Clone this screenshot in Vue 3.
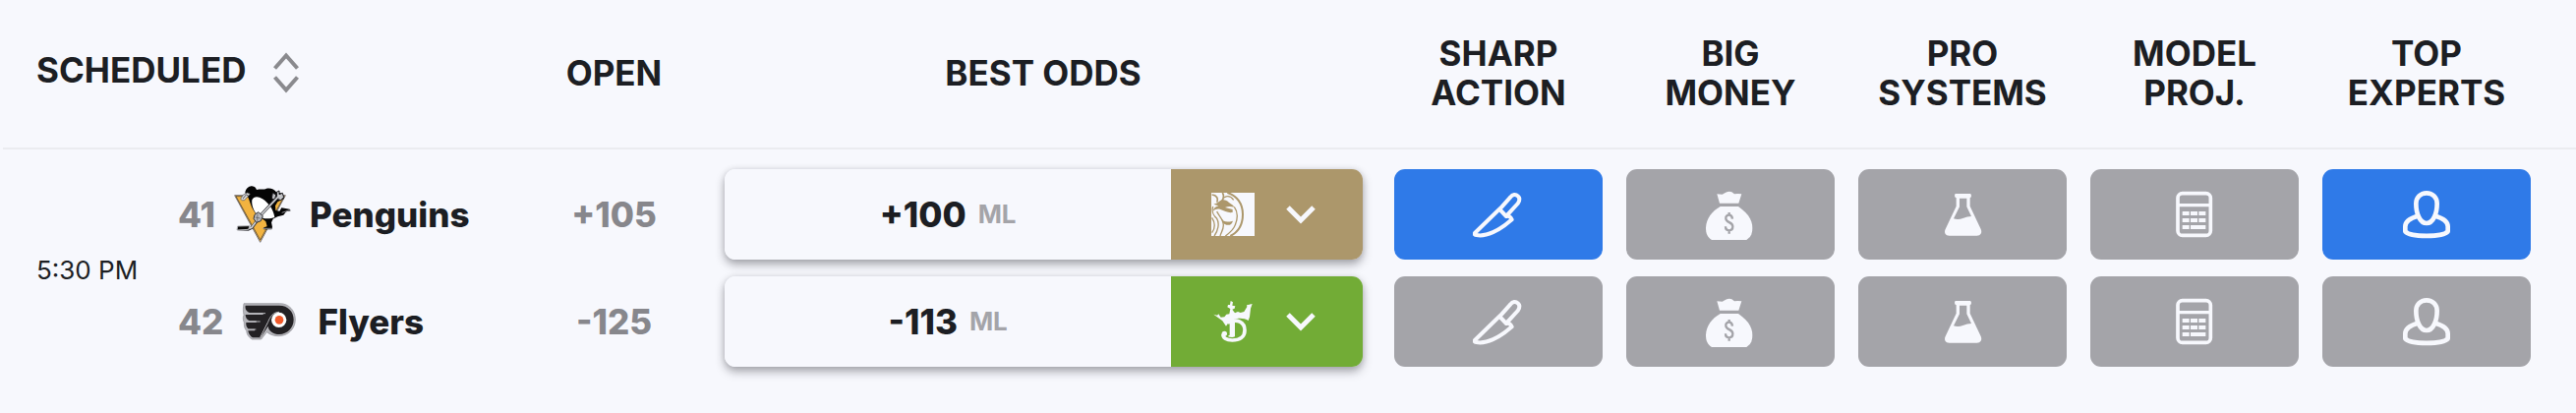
<script setup>
const signals = [
  { key: 'sharp', lines: ['SHARP', 'ACTION'] },
  { key: 'money', lines: ['BIG', 'MONEY'] },
  { key: 'systems', lines: ['PRO', 'SYSTEMS'] },
  { key: 'model', lines: ['MODEL', 'PROJ.'] },
  { key: 'experts', lines: ['TOP', 'EXPERTS'] },
]

const teams = [
  { id: 41, name: 'Penguins', open: '+105', odds: '+100', book: 'mgm', bookName: 'BetMGM', active: ['sharp', 'experts'] },
  { id: 42, name: 'Flyers', open: '-125', odds: '-113', book: 'dk', bookName: 'DraftKings', active: [] },
]
</script>

<template>
  <main class="board">
    <table class="odds-table">
      <colgroup>
        <col class="c-time" />
        <col class="c-team" />
        <col class="c-open" />
        <col class="c-best" />
        <col v-for="s in signals" :key="s.key" class="c-signal" />
        <col class="c-end" />
      </colgroup>
      <thead>
        <tr>
          <th colspan="2" scope="col" class="left">
            <button type="button" class="sort">
              SCHEDULED
              <svg class="sort-icon" viewBox="0 0 28 48" aria-hidden="true">
                <path d="M2.500 19.500 14 6.500 25.500 19.500M2.500 28.500 14 41.500 25.500 28.500" fill="none" stroke="#8a8a8e" stroke-width="4" />
              </svg>
            </button>
          </th>
          <th scope="col">OPEN</th>
          <th scope="col">BEST ODDS</th>
          <th v-for="s in signals" :key="s.key" scope="col">{{ s.lines[0] }}<br />{{ s.lines[1] }}</th>
          <td class="end"></td>
        </tr>
      </thead>
      <tbody>
        <tr v-for="(t, i) in teams" :key="t.id">
          <td v-if="i === 0" rowspan="2" class="time">5:30 PM</td>
          <td>
            <div class="team">
              <span class="muted">{{ t.id }}</span>
              <svg v-if="t.id === 41" class="logo" viewBox="60 54 180 180" aria-hidden="true">
                <path d="M65 86H220L143 229Z" fill="#f2b340" stroke="#77757a" stroke-width="3" />
                <path d="M69 89H216L143 222Z" fill="none" stroke="#3b3630" stroke-width="2" />
                <path d="M97 79C98 66 108 57 118 58C127 59 130 64 132 69C146 66 154 70 162 65C174 62 186 67 192 76L211 80L216 96L196 106L189 118L190 132L202 134L208 124L233 128L236 133L222 136L214 146L196 151L181 158L177 168L180 183L178 190L154 190L154 184L164 181L160 166L148 156C130 148 119 130 112 108C108 97 107 92 103 88Z" fill="#050505" />
                <path d="M118 100C123 88 137 88 150 97C168 109 183 127 187 153C170 160 148 158 134 146C122 132 116 114 118 100Z" fill="#fff" />
                <path d="M83 97L91 84L104 78L112 82L104 91L95 101L88 101Z" fill="#d4d4d7" stroke="#555" stroke-width="2" />
                <path d="M90 96L100 84M100 83L107 88" fill="none" stroke="#25252a" stroke-width="2" />
                <path d="M181 78L191 84L188 99L178 96ZM193 76L201 72L201 83L211 79L215 92L206 101L194 97Z" fill="#c3c4c8" stroke="#17171b" stroke-width="3" />
                <path d="M197 90L146 145L118 184L106 190L76 188" fill="none" stroke="#353539" stroke-width="9" />
                <path d="M201 87L147 144L117 184L100 190" fill="none" stroke="#d1d2d5" stroke-width="5" />
                <path d="M126 145L137 137L151 149L145 164L131 169L123 157Z" fill="#b9bbc0" stroke="#303035" stroke-width="3" />
                <path d="M128 153L143 156M135 142L134 164" stroke="#505055" stroke-width="2" />
                <path d="M74 180L111 179L107 190L72 192Z" fill="#070707" stroke="#b6b7bb" stroke-width="3" />
                <path d="M151 187H179M209 139L233 131" stroke="#8f8f94" stroke-width="3" />
              </svg>
              <svg v-else class="logo" viewBox="75 381 180 180" aria-hidden="true">
                <path d="M84 416H194C222 416 241 438 241 465C241 494 218 515 190 515C176 515 164 511 154 503L137 525H109C98 519 93 510 92 499C87 493 85 486 85 479V474C81 466 81 458 84 451C81 438 82 427 84 416Z" fill="#b5b5ba" stroke="#8d8d92" stroke-width="2" />
                <path d="M89 422H192C219 422 236 441 236 465C236 491 216 510 192 510C175 510 159 500 158 485L135 520H111C103 516 98 507 97 499H117V494H99C92 489 90 481 91 474H122V469H101C92 464 89 457 89 450H143V445H103C91 441 87 433 89 422Z" fill="#232124" />
                <path d="M134 519L158 472C165 454 175 442 192 442" fill="none" stroke="#b8b8bd" stroke-width="3" />
                <path d="M99 446H150M96 471H134M98 495H121" stroke="#b8b8bd" stroke-width="3" />
                <circle cx="191" cy="466" r="23" fill="#fff" />
                <circle cx="192" cy="466" r="13" fill="#f15a2b" />
              </svg>
              <span class="name">{{ t.name }}</span>
            </div>
          </td>
          <td class="open muted">{{ t.open }}</td>
          <td class="best">
            <div class="odds">
              <button type="button" class="price">
                <span>{{ t.odds }}</span>
                <small>ML</small>
              </button>
              <button type="button" class="book" :class="t.book" :aria-label="t.bookName">
                <svg v-if="t.book === 'mgm'" class="book-logo" viewBox="156 109 132 132" aria-hidden="true">
                  <path d="M156 109H288V241H156Z" fill="#f7f8fd" />
                  <g fill="none" stroke="#ac976b">
                    <path d="M205 109C235 118 252 143 252 175C252 205 238 229 214 241" stroke-width="6" />
                    <path d="M195 124C207 116 216 120 224 131" stroke-width="4" />
                    <path d="M190 109C196 119 194 127 187 136M158 115C172 116 178 126 173 138" stroke-width="5" />
                    <path d="M161 151C156 170 163 179 173 188C182 203 176 226 165 241M173 166C178 179 193 190 193 208C193 222 185 232 183 241M226 152C238 168 237 187 229 207C225 220 210 233 199 241" stroke-width="4" />
                    <path d="M158 185C168 201 170 215 158 231" stroke-width="4" />
                  </g>
                  <path d="M163 144C176 143 180 132 190 131C198 130 204 133 210 139C218 144 223 147 226 153C216 150 206 150 198 154L221 160V169C207 171 196 165 184 160C174 157 168 160 161 165C163 156 170 151 178 149Z" fill="#ac976b" />
                  <path d="M188 188C192 197 202 201 222 195C219 205 212 209 202 207C193 205 188 198 188 188Z" fill="#ac976b" />
                </svg>
                <svg v-else class="book-logo" viewBox="156 437 132 132" aria-hidden="true">
                  <path d="M163 481L174 484L178 480L185 490L196 489L202 481L211 480L214 464L205 459L207 452L213 452L215 440L222 444L220 454L229 456L227 463L220 466L228 477L237 473L245 476L256 473L265 458L264 453L281 449L276 463L273 489L269 500C250 488 217 491 201 517L190 501Z" fill="#f7f8fd" />
                  <path d="M206 506C235 493 258 504 258 530C258 551 242 560 220 560C201 560 191 552 192 542" fill="none" stroke="#f7f8fd" stroke-width="11" />
                  <circle cx="196" cy="540" r="8" fill="#f7f8fd" />
                  <path d="M212 502H228V549C221 552 214 551 206 548L212 544Z" fill="#f7f8fd" />
                </svg>
                <svg class="chevron" viewBox="0 0 32 20" aria-hidden="true">
                  <path d="M3 3 16 16 29 3" fill="none" stroke="#f7f8fd" stroke-width="5" />
                </svg>
              </button>
            </div>
          </td>
          <td v-for="s in signals" :key="s.key" class="signal">
            <button type="button" class="pill" :class="{ on: t.active.includes(s.key) }" :aria-label="s.lines.join(' ')">
              <svg v-if="s.key === 'sharp'" viewBox="114 96 156 156" aria-hidden="true">
                <g fill="none" stroke="#f7f8fd" stroke-width="12" stroke-linejoin="round">
                  <path d="M197 157L229 121C235 113 245 112 251 118C258 124 257 133 251 141L219 176" />
                  <path d="M195 158L120 231C118 235 120 237 125 237C154 243 195 224 233 190C229 181 222 178 216 180L195 158Z" />
                </g>
              </svg>
              <svg v-else-if="s.key === 'money'" viewBox="820 96 156 156" aria-hidden="true">
                <path d="M857 112Q866 112 873 113Q882 109 887 106Q894 103 902 106L910 112Q920 110 932 112L923 140H865Z" fill="#f7f8fd" />
                <path d="M867 150H922C950 169 965 190 965 215C965 232 960 244 947 252H841C828 244 823 232 823 215C824 187 842 164 867 150Z" fill="#f7f8fd" />
                <path d="M904 188C903 179 899 176 894 176C887 176 883 181 884 187C885 200 905 197 905 211C905 219 901 223 894 223C886 223 883 218 883 211M894 168V177M894 222V233" fill="none" stroke="#a4a4a9" stroke-width="7" />
              </svg>
              <svg v-else-if="s.key === 'systems'" viewBox="119 96 156 156" aria-hidden="true">
                <path fill-rule="evenodd" d="M176 111H220Q224 111 224 117Q224 122 220 124V149L253 219C258 231 252 239 241 239H157C145 239 140 230 145 219L178 149V124Q173 123 173 117Q173 111 176 111ZM188 125V151L170 187Q184 192 200 185Q212 181 224 180L210 151V125Z" fill="#f7f8fd" />
              </svg>
              <svg v-else-if="s.key === 'model'" viewBox="828 96 156 156" aria-hidden="true">
                <rect x="855" y="110" width="100" height="128" rx="14" fill="none" stroke="#f7f8fd" stroke-width="11" />
                <path d="M855 146H955" stroke="#f7f8fd" stroke-width="10" />
                <path d="M869 171H890M894 171H915M919 171H940M869 192H890M894 192H915M919 192H940M869 213H890M894 213H940" stroke="#f7f8fd" stroke-width="12" />
              </svg>
              <svg v-else viewBox="305 126 156 156" aria-hidden="true">
                <g fill="none" stroke="#f7f8fd" stroke-width="14" stroke-linejoin="round">
                  <path d="M383 139C402 139 415 153 415 171C415 202 403 231 383 231C363 231 351 202 351 171C351 153 364 139 383 139Z" />
                  <path d="M355 209C332 216 318 228 318 241V256C334 274 432 274 448 256V241C448 228 434 216 411 209" />
                </g>
              </svg>
            </button>
          </td>
          <td></td>
        </tr>
      </tbody>
    </table>
  </main>
</template>

<style>
body {
  background: #f7f8fd;
}
</style>

<style scoped>
.board {
  padding-left: 3px;
  background: #f7f8fd;
  color: #1c1e23;
  font-family: Inter, "Liberation Sans", sans-serif;
  font-size: 35px;
  font-weight: 700;
  line-height: 40px;
}
button {
  margin: 0;
  padding: 0;
  border: 0;
  background: none;
  color: inherit;
  font: inherit;
  cursor: pointer;
}
.odds-table {
  width: 100%;
  table-layout: fixed;
  border-collapse: separate;
  border-spacing: 0;
}
.c-time { width: 178px; }
.c-team { width: 352px; }
.c-open { width: 183px; }
.c-best { width: 690px; }
.c-signal { width: 236px; }
.c-end { width: 34px; }
th,
td {
  padding: 0;
  text-align: center;
  vertical-align: middle;
}
th,
.end {
  height: 148px;
  padding-bottom: 2px;
  border-bottom: 2px solid #ebecf0;
  font-weight: 700;
}
th.left {
  padding-left: 34px;
  text-align: left;
}
.sort-icon {
  width: 28px;
  height: 48px;
  margin-left: 18px;
  vertical-align: middle;
}
tbody tr:first-child td {
  padding-top: 20px;
  padding-bottom: 8px;
}
tbody tr:last-child td {
  padding-top: 9px;
  padding-bottom: 24px;
}
.odds-table tbody td.time {
  padding: 0 0 0 34px;
  font-size: 26px;
  font-weight: 400;
  text-align: left;
}
.team {
  display: flex;
  align-items: center;
  gap: 18px;
}
.name,
.muted {
  font-weight: 800;
}
.muted {
  color: #87878c;
}
.logo {
  width: 60px;
  height: 60px;
}
tbody td.best {
  padding-left: 21px;
  padding-right: 20px;
}
.odds {
  display: flex;
  height: 92px;
  border-radius: 11px;
  box-shadow: 0 5px 10px rgba(20, 20, 30, 0.34), 0 0 6px rgba(20, 20, 30, 0.1);
}
.price {
  width: 70%;
  display: flex;
  align-items: center;
  justify-content: center;
  gap: 12px;
  border-radius: 11px 0 0 11px;
  background: #f7f8fd;
  font-weight: 800;
}
.price small {
  color: #a4a4a9;
  font-size: 26px;
  font-weight: 700;
}
.book {
  box-sizing: border-box;
  width: 30%;
  display: flex;
  align-items: center;
  justify-content: center;
  gap: 31px;
  padding-right: 6px;
  border-radius: 0 11px 11px 0;
}
.mgm { background: #ac976b; }
.dk { background: #72ac36; }
.book-logo {
  width: 44px;
  height: 44px;
}
.chevron {
  width: 32px;
  height: 20px;
}
tbody td.signal {
  padding-left: 12px;
  padding-right: 12px;
}
.pill {
  display: flex;
  align-items: center;
  justify-content: center;
  width: 100%;
  height: 92px;
  border-radius: 11px;
  background: #a4a4a9;
}
.pill.on {
  background: #2f7ae8;
}
.pill svg {
  width: 52px;
  height: 52px;
}
</style>
